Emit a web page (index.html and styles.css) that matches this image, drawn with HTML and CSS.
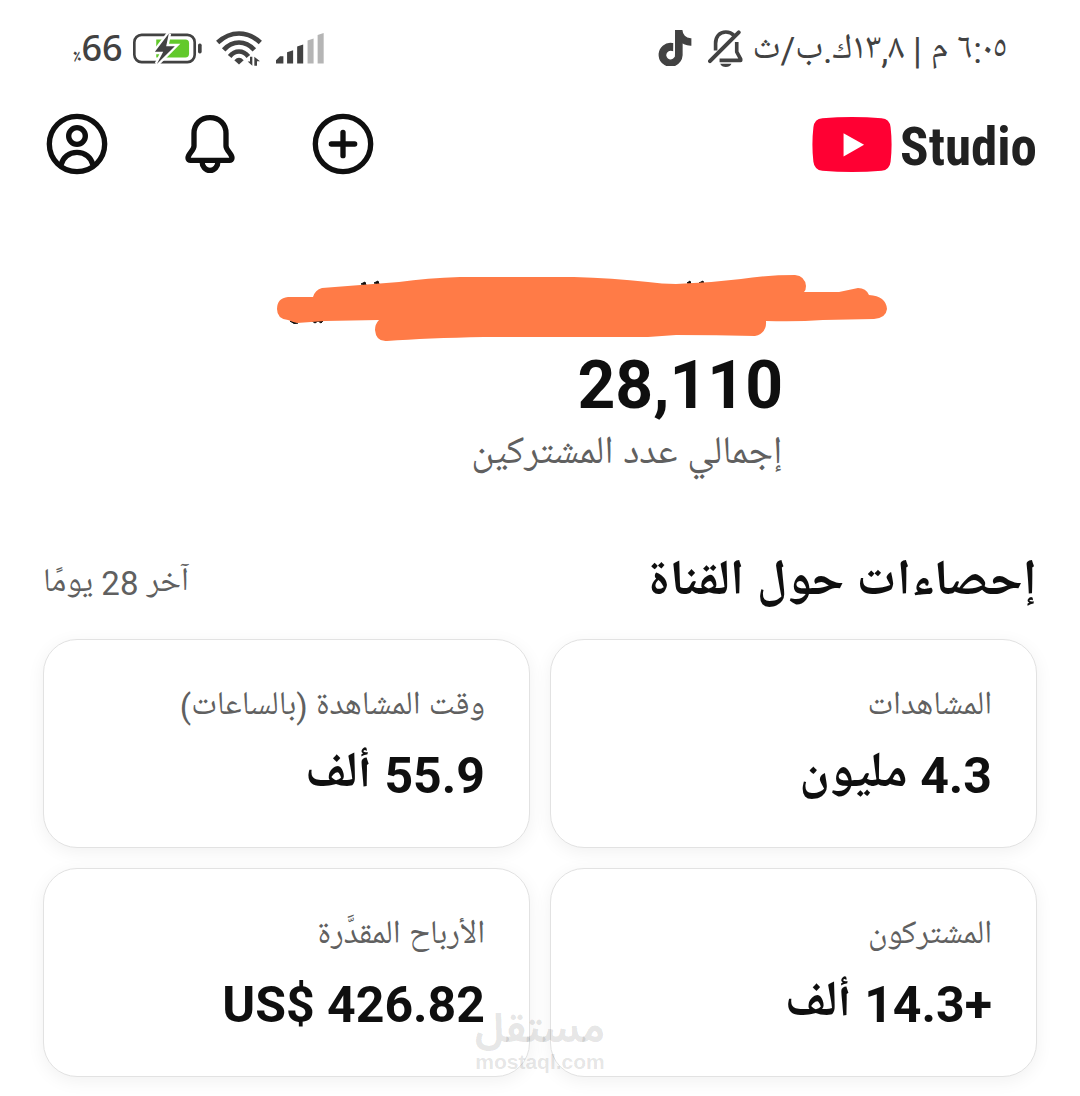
FILE: index.html
```html
<!DOCTYPE html>
<html lang="ar" dir="rtl">
<head>
<meta charset="utf-8">
<meta name="viewport" content="width=device-width, initial-scale=1">
<title>Studio</title>
<link rel="stylesheet" href="styles.css">
</head>

<body>
<div class="status">
	<div class="status_text">
		<span>٦:٠٥ م | ١٣,٨ك.ب/ث</span>
		<svg class="ico_mute" viewBox="0 0 104 112" aria-hidden="true">
			<g fill="none" stroke="#424242" stroke-width="11" stroke-linejoin="round">
				<path d="M22 62V40C22 20 34 6 53 6c10 0 18 3 24 10"/>
				<path d="M86 36v30l12 22v4H34"/>
				<path d="M5 94L92 7" stroke-width="12" stroke-linecap="round"/>
			</g>
			<path d="M36 102h34c-3 7-9 10-17 10s-14-3-17-10z" fill="#424242"/>
		</svg>
		<svg class="ico_note" viewBox="0 0 24 24" aria-hidden="true">
			<path fill="#424242" stroke="#424242" d="M12.525.02c1.31-.02 2.61-.01 3.91-.02.08 1.53.63 3.09 1.75 4.17 1.12 1.11 2.7 1.62 4.24 1.79v4.03c-1.44-.05-2.89-.35-4.2-.97-.57-.26-1.1-.59-1.62-.93-.01 2.92.01 5.84-.02 8.75-.08 1.4-.54 2.79-1.35 3.94-1.31 1.92-3.58 3.17-5.91 3.21-1.43.08-2.86-.31-4.08-1.03-2.02-1.19-3.44-3.37-3.65-5.71-.02-.5-.03-1-.01-1.49.18-1.9 1.12-3.72 2.58-4.96 1.66-1.44 3.98-2.13 6.15-1.72.02 1.48-.04 2.96-.04 4.44-.99-.32-2.15-.23-3.02.37-.63.41-1.11 1.04-1.36 1.75-.21.51-.15 1.07-.14 1.61.24 1.64 1.82 3.02 3.5 2.87 1.12-.01 2.19-.66 2.77-1.61.19-.33.4-.67.41-1.06.1-1.79.06-3.57.07-5.36.01-4.03-.01-8.05.02-12.07z"/>
		</svg>
	</div>
	<div class="status_icons" dir="ltr">
		<span class="percent"><small>٪</small>66</span>
		<svg class="ico_battery" viewBox="0 0 208 98" aria-hidden="true">
			<rect x="4" y="8" width="182" height="82" rx="22" fill="none" stroke="#424242" stroke-width="8"/>
			<rect x="196" y="34" width="11" height="30" rx="5" fill="#424242"/>
			<path d="M70 22h88q11 0 11 11v32q0 11-11 11H70z" fill="#62c92b"/>
			<path d="M108 4L66 59h25L72 96l54-54h-26z" fill="#424242" stroke="#fff" stroke-width="14" paint-order="stroke"/>
		</svg>
		<svg class="ico_wifi" viewBox="0 0 138 104" aria-hidden="true">
			<g fill="none" stroke="#424242" stroke-width="14">
				<path d="M5 34Q34 7 69 7t64 27"/>
				<path d="M23 56Q43 34 69 34t46 22"/>
				<path d="M41 76Q53 61 69 61t28 15"/>
			</g>
			<path d="M55 87q14-14 28 0L69 100z" fill="#424242"/>
			<path d="M109 77v27L95 91h7V77zM115 104V77l17 13h-9v14z" fill="#424242"/>
		</svg>
		<svg class="ico_signal" viewBox="0 0 143 92" aria-hidden="true">
			<path d="M0 91V81l12-12h10v22zM33 91V57l18-6v40zM63 91V40l18-6v57z" fill="#424242"/>
			<path d="M94 91V22l18-6v75zM124 91V6l18-6v91z" fill="#b5b5b5"/>
		</svg>
	</div>
</div>

<header class="top">
	<a href="#" class="logo" dir="ltr">
		<svg viewBox="0 0 239 166" aria-hidden="true">
			<path d="M30 4Q120-4 209 4q24 2 27 27 6 52 0 104-3 25-27 27-89 8-179 0-24-2-27-27-6-52 0-104Q6 6 30 4z" fill="#ff0033"/>
			<path d="M94 49l62 35-62 35z" fill="#fff"/>
		</svg>
		<span>Studio</span>
	</a>
	<nav class="actions">
		<button type="button" aria-label="إنشاء">
			<svg viewBox="0 0 186 186" aria-hidden="true">
				<circle cx="93" cy="93" r="83"/>
				<path d="M93 58v70M58 93h70"/>
			</svg>
		</button>
		<button type="button" aria-label="الإشعارات">
			<svg viewBox="0 0 186 186" aria-hidden="true">
				<path d="M93 14c-29 0-48 20-48 47v38c0 13-18 24-18 36 0 4 3 7 8 7h116c5 0 8-3 8-7 0-12-18-23-18-36V61c0-27-19-47-48-47z"/>
				<path d="M69 144c0 16 10 28 24 28s24-12 24-28"/>
			</svg>
		</button>
		<button type="button" aria-label="الحساب">
			<svg viewBox="0 0 186 186" aria-hidden="true">
				<circle cx="93" cy="93" r="83"/>
				<circle cx="93" cy="69" r="25"/>
				<path d="M45 156c5-23 24-38 48-38s43 15 48 38"/>
			</svg>
		</button>
	</nav>
</header>

<main>
	<section class="channel">
		<!-- channel name, scribbled over -->
		<svg class="scribble" viewBox="0 0 611 68" aria-hidden="true">
			<path d="M84 10l4-2 1 3zM97 9l4-2 1 3zM410 9l3-2 1 3zM422 9l4-2 1 3zM13 47q4 4 8 2zM35 47l3 2 3-2 3 2 3-3z" fill="#0f0f0f" stroke="#0f0f0f"/>
			<path d="M11 23H36Q38 16 45 14L122 8Q150 4 183 3H297Q335 4 371 8Q385 10 399 10Q432 9 464 5Q490 1 518 1Q528 2 529 12Q529 16 527 18H562L581 14Q589 14 592 21Q609 22 610 35Q609 44 597 45L546 46Q520 48 489 47Q490 59 478 62Q440 61 399 61L371 63H207Q150 64 110 67Q99 68 98 56Q98 50 102 46L48 47L20 49Q16 48 11 46Q0 45 0 35Q0 24 11 23z" fill="#ff7b47"/>
		</svg>
		<p class="count">28,110</p>
		<p class="caption">إجمالي عدد المشتركين</p>
	</section>

	<section>
		<div class="title">
			<h2>إحصاءات حول القناة</h2>
			<span>آخر 28 يومًا</span>
		</div>
		<div class="cards">
			<div class="card">
				<h3>المشاهدات</h3>
				<p>4.3 مليون</p>
			</div>
			<div class="card">
				<h3>وقت المشاهدة (بالساعات)</h3>
				<p>55.9 ألف</p>
			</div>
			<div class="card">
				<h3>المشتركون</h3>
				<p>+14.3 ألف</p>
			</div>
			<div class="card">
				<h3>الأرباح المقدَّرة</h3>
				<p><bdi dir="ltr">US$ 426.82</bdi></p>
			</div>
			<div class="watermark">
				<b>مستقل</b>
				<span>mostaql.com</span>
			</div>
		</div>
	</section>
</main>
</body>
</html>
```
FILE: styles.css
```css
*{ margin:0; padding:0; box-sizing:border-box;}
body{ background:#fff; color:#0f0f0f; font-family:Roboto, "Noto Naskh Arabic UI", "Noto Naskh Arabic", "DejaVu Sans", sans-serif;}
svg{ display:block; flex:none;}
a{ text-decoration:none; color:inherit;}

/* status bar */
.status{ display:flex; justify-content:space-between; align-items:center; height:96px; padding:0 73px; color:#424242;}
.status_text{ display:flex; align-items:center; gap:10px; font-size:36px; line-height:48px;}
.status_text span{ padding-top:6px;}
.status_icons{ display:flex; align-items:center; gap:14px;}
.percent{ padding-top:6px; font-family:"Noto Sans", "Noto Naskh Arabic", sans-serif; font-size:36px; line-height:40px; font-weight:500; margin-right:-4px;}
.percent small{ font-size:18px; font-weight:700;}
.ico_mute{ width:35px; height:37px;}
.ico_note{ width:36px; height:36px; margin-right:5px;}
.ico_battery{ width:69px; height:33px;}
.ico_wifi{ width:46px; height:35px;}
.ico_signal{ width:48px; height:31px;}

/* header */
.top{ display:flex; justify-content:space-between; align-items:center; height:96px; padding:0 43px;}
.logo{ display:flex; align-items:center; gap:8px; font-family:"Roboto Condensed", "Liberation Sans Narrow", Roboto, sans-serif; font-size:53px; line-height:60px; font-weight:700; color:#212121;}
.logo svg{ width:80px; height:55px;}
.logo span{ padding-top:6px;}
.actions{ display:flex; gap:65px;}
.actions button{ width:68px; height:68px; display:flex; align-items:center; justify-content:center; border:0; background:none; cursor:pointer;}
.actions svg{ width:62px; height:62px; fill:none; stroke:#0f0f0f; stroke-width:16; stroke-linecap:round; stroke-linejoin:round;}

main{ padding:0 43px;}

/* channel */
.channel{ padding:82px 254px 0 0;}
.scribble{ width:611px; height:68px; margin-right:-105px;}
.count{ font-size:66px; line-height:80px; font-weight:700; margin-top:4px;}
.caption{ font-size:39px; line-height:58px; color:#606060;}

.title{ display:flex; justify-content:space-between; align-items:center; margin:68px 0 23px;}
.title h2{ font-size:50px; line-height:64px;}
.title span{ font-size:33px; line-height:64px; color:#606060;}

/* cards */
.cards{ position:relative; display:grid; grid-template-columns:1fr 1fr; gap:20px; padding-bottom:19px;}
.card{ padding:47px 44px 39px; border:1px solid #e2e2e2; border-radius:34px; background:#fff; box-shadow:0 4px 18px rgba(0,0,0,.06);}
.card h3{ font-size:33px; line-height:40px; font-weight:400; color:#606060;}
.card p{ margin-top:17px; font-size:50px; line-height:64px; font-weight:700;}

.watermark{ position:absolute; left:0; right:0; bottom:24px; display:flex; flex-direction:column; align-items:center; color:rgba(0,0,0,.11); pointer-events:none;}
.watermark b{ font-family:"Noto Sans Arabic", "DejaVu Sans", sans-serif; font-size:39px; line-height:44px;}
.watermark span{ font-family:"Liberation Sans", sans-serif; font-size:21px; line-height:20px; font-weight:700;}
```
